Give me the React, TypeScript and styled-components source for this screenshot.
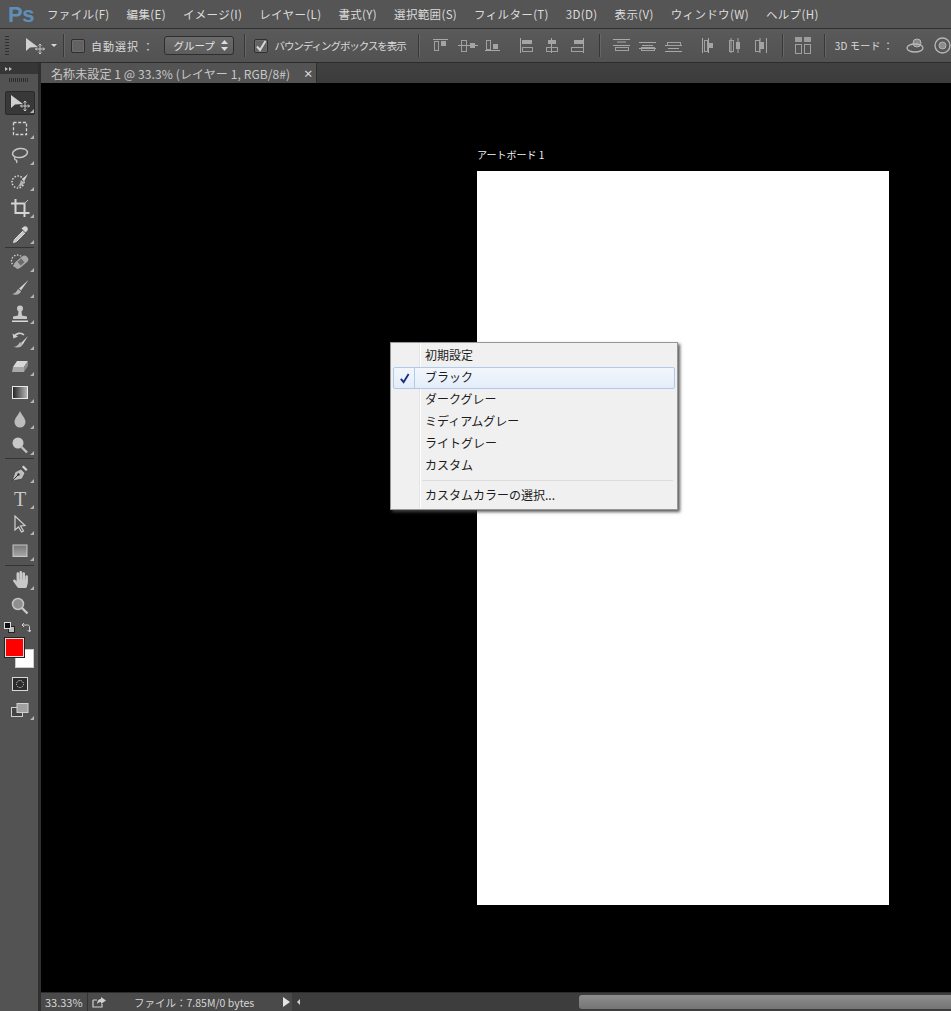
import React from "react";
import styled, { createGlobalStyle } from "styled-components";
import { FaHandPaper } from "react-icons/fa";

const menus = [
  "ファイル(F)",
  "編集(E)",
  "イメージ(I)",
  "レイヤー(L)",
  "書式(Y)",
  "選択範囲(S)",
  "フィルター(T)",
  "3D(D)",
  "表示(V)",
  "ウィンドウ(W)",
  "ヘルプ(H)",
];

const bgItems = ["初期設定", "ブラック", "ダークグレー", "ミディアムグレー", "ライトグレー", "カスタム"];

const Global = createGlobalStyle`
  html, body {
    margin: 0;
    height: 1011px;
    overflow: hidden;
    background: #000;
  }
  * { box-sizing: border-box; }
`;

const Shell = styled.div`
  width: 951px;
  height: 1011px;
  display: flex;
  flex-direction: column;
  overflow: hidden;
  background: #535353;
  color: #d4d4d4;
  font-family: "Noto Sans CJK JP", "Noto Sans", sans-serif;
  font-size: 11px;
`;

const MenuBar = styled.div`
  height: 29px;
  flex: none;
  display: flex;
  align-items: center;
  padding-left: 8px;
  background: #555;
  border-bottom: 1px solid #303030;
`;
const Logo = styled.span`
  width: 39px;
  font-family: "Liberation Sans", sans-serif;
  font-size: 22px;
  font-weight: 700;
  color: #5f8fb8;
  letter-spacing: -0.5px;
  line-height: 29px;
`;
const MenuItem = styled.span`
  margin-right: 17px;
  font-size: 11.5px;
  letter-spacing: 0.35px;
  color: #dcdcdc;
  white-space: nowrap;
`;

const OptionsBar = styled.div`
  height: 34px;
  flex: none;
  display: flex;
  align-items: center;
  background: linear-gradient(#5a5a5a, #525252);
  border-bottom: 1px solid #2c2c2c;
  overflow: hidden;
  svg {
    flex: none;
  }
`;
const Grip = styled.div`
  flex: none;
  width: 4px;
  height: 20px;
  margin: 0 15px 0 5px;
  background: repeating-linear-gradient(#2f2f2f 0 1px, transparent 1px 3px);
`;
const Divider = styled.div<{ $left: number; $right: number }>`
  flex: none;
  width: 1px;
  height: 23px;
  margin: 0 ${(p) => p.$right}px 0 ${(p) => p.$left}px;
  background: #383838;
  box-shadow: 1px 0 0 #666;
`;
const CheckBox = styled.div`
  flex: none;
  width: 14px;
  height: 14px;
  display: flex;
  align-items: center;
  justify-content: center;
  border: 1px solid #2f2f2f;
  border-radius: 2px;
  background: #626262;
  box-shadow: inset 0 0 0 1px #6d6d6d;
`;
const OptionLabel = styled.span<{ $left: number; $gap?: string; $size?: number }>`
  flex: none;
  margin-left: ${(p) => p.$left}px;
  font-size: ${(p) => p.$size || 11}px;
  letter-spacing: ${(p) => p.$gap || "0"};
  color: #dadada;
  white-space: nowrap;
`;
const SelectBox = styled.div`
  flex: none;
  width: 70px;
  height: 19px;
  margin-left: 10px;
  padding: 0 5px 0 8px;
  display: flex;
  align-items: center;
  justify-content: space-between;
  border: 1px solid #2e2e2e;
  border-radius: 3px;
  background: linear-gradient(#6b6b6b, #5c5c5c);
  color: #e2e2e2;
  font-size: 10.5px;
`;
const SelectArrows = styled.svg`
  width: 7px;
  height: 11px;
`;
const Spaced = styled.div<{ $left: number }>`
  flex: none;
  display: flex;
  margin-left: ${(p) => p.$left}px;
`;
const ArrowDown = styled.div`
  flex: none;
  width: 0;
  height: 0;
  margin: 0 0 0 5px;
  border: 3px solid transparent;
  border-top: 3px solid #d8d8d8;
  border-bottom: 0;
`;

const Workspace = styled.div`
  flex: 1;
  min-height: 0;
  display: flex;
`;

const Toolbox = styled.div`
  flex: none;
  width: 41px;
  display: flex;
  flex-direction: column;
  background: #535353;
  border-right: 3px solid #2f2f2f;
`;
const ToolboxHead = styled.div`
  height: 11px;
  padding-left: 5px;
  display: flex;
  gap: 1px;
  align-items: center;
  background: #363636;
`;
const HeadArrow = styled.span`
  width: 0;
  height: 0;
  border-left: 3px solid #c0c0c0;
  border-top: 2.5px solid transparent;
  border-bottom: 2.5px solid transparent;
`;
const ToolGrip = styled.div`
  width: 20px;
  height: 4px;
  margin: 4px auto 8px 9px;
  background: repeating-linear-gradient(90deg, #2d2d2d 0 1px, transparent 1px 2px);
`;
const ToolButton = styled.div<{ $active?: boolean; $more?: boolean }>`
  position: relative;
  flex: none;
  width: 30px;
  height: 24px;
  margin: 1px 0 1.15px 5px;
  display: flex;
  align-items: center;
  justify-content: center;
  border-radius: 2px;
  background: ${(p) => (p.$active ? "#383838" : "transparent")};
  border: 1px solid ${(p) => (p.$active ? "#2a2a2a" : "transparent")};
  color: #c4c4c4;
  &::after {
    content: "";
    display: ${(p) => (p.$more ? "block" : "none")};
    position: absolute;
    right: 0;
    bottom: 1px;
    width: 0;
    height: 0;
    border-left: 4px solid transparent;
    border-bottom: 4px solid #b4b4b4;
  }
`;
const ToolRule = styled.div`
  flex: none;
  width: 29px;
  height: 1px;
  margin: 0.5px 0 0.5px 5px;
  background: #333;
`;
const TypeGlyph = styled.span`
  font-family: "Liberation Serif", serif;
  font-size: 20px;
  line-height: 20px;
  color: #c8c8c8;
`;
const SwapRow = styled.div`
  height: 13px;
  margin-top: 2px;
  padding: 0 7px 0 4px;
  display: flex;
  align-items: center;
  justify-content: space-between;
`;
const MiniSwatches = styled.div`
  position: relative;
  width: 11px;
  height: 11px;
`;
const MiniBack = styled.span`
  position: absolute;
  right: 0;
  bottom: 0;
  width: 7px;
  height: 7px;
  background: #bbb;
  border: 1px solid #222;
`;
const MiniFront = styled.span`
  position: absolute;
  left: 0;
  top: 0;
  width: 7px;
  height: 7px;
  background: #111;
  border: 1px solid #ddd;
`;
const ColorStack = styled.div`
  position: relative;
  width: 29px;
  height: 30px;
  margin: 4px 0 3px 5px;
`;
const BackColor = styled.div`
  position: absolute;
  right: 0;
  bottom: 0;
  width: 19px;
  height: 19px;
  background: #fff;
  border: 1px solid #ccc;
`;
const FrontColor = styled.div`
  position: absolute;
  left: 0;
  top: 0;
  width: 19px;
  height: 19px;
  background: #f00;
  border: 1px solid #ddd;
  box-shadow: 0 0 0 1px #222;
`;

const Main = styled.div`
  flex: 1;
  min-width: 0;
  display: flex;
  flex-direction: column;
`;
const TabStrip = styled.div`
  height: 20px;
  flex: none;
  display: flex;
  background: linear-gradient(#414141, #3b3b3b);
`;
const DocTab = styled.div`
  width: 276px;
  padding-left: 10px;
  display: flex;
  align-items: center;
  background: #535353;
  border-right: 1px solid #2e2e2e;
  color: #c8c8c8;
  font-size: 12px;
  letter-spacing: 0.1px;
  white-space: nowrap;
`;
const TabClose = styled.span`
  margin-left: 13px;
  font-size: 10px;
  font-weight: 700;
  color: #ddd;
`;

const Canvas = styled.div`
  position: relative;
  flex: 1;
  min-height: 0;
  padding: 65px 0 0 436px;
  background: #000;
`;
const ArtboardLabel = styled.div`
  height: 23px;
  color: #f2f2f2;
  font-size: 10px;
  line-height: 14px;
`;
const Artboard = styled.div`
  width: 412px;
  height: 734px;
  background: #fff;
`;

const ContextMenu = styled.div`
  position: absolute;
  left: 349px;
  top: 259px;
  width: 288px;
  height: 168px;
  padding: 2px;
  background: linear-gradient(90deg, #f0f0f0 0 28px, #e3e3e3 28px 29px, #fff 29px 30px, #f0f0f0 30px);
  border: 1px solid #979797;
  box-shadow: 2px 2px 3px rgba(70, 70, 70, 0.9);
  color: #1c1c1c;
  font-size: 12px;
`;
const ContextRow = styled.div<{ $checked?: boolean }>`
  position: relative;
  height: 22px;
  padding: 0 0 4px 31px;
  display: flex;
  align-items: center;
  border: 1px solid ${(p) => (p.$checked ? "#aecbeb" : "transparent")};
  border-radius: 2px;
  background: ${(p) => (p.$checked ? "linear-gradient(#f3f7fc, #e3edf9)" : "transparent")};
  white-space: nowrap;
`;
const CheckCell = styled.div`
  position: absolute;
  left: 0;
  top: 0;
  bottom: 0;
  width: 21px;
  display: flex;
  align-items: center;
  justify-content: center;
  border-right: 1px solid #aecbeb;
`;
const ContextRule = styled.div`
  height: 1px;
  margin: 3px 2px 4px 29px;
  background: #dcdcdc;
`;

const StatusBar = styled.div`
  height: 19px;
  flex: none;
  display: flex;
  align-items: center;
  background: #4a4a4a;
  border-top: 1px solid #2b2b2b;
  color: #d6d6d6;
  font-size: 10.5px;
`;
const Zoom = styled.div`
  width: 47px;
  height: 100%;
  padding-left: 4px;
  display: flex;
  align-items: center;
  border-right: 1px solid #333;
  font-size: 11px;
`;
const ShareBox = styled.div`
  width: 30px;
  padding-left: 4px;
  display: flex;
  align-items: center;
`;
const DocInfo = styled.div`
  width: 165px;
  padding-left: 16px;
  white-space: nowrap;
`;
const PlayArrow = styled.span`
  width: 0;
  height: 0;
  margin-right: 2px;
  border-left: 7px solid #e4e4e4;
  border-top: 5px solid transparent;
  border-bottom: 5px solid transparent;
`;
const ScrollTrack = styled.div`
  flex: 1;
  height: 100%;
  padding-left: 5px;
  display: flex;
  align-items: center;
  background: #3d3d3d;
`;
const ScrollLeft = styled.span`
  width: 0;
  height: 0;
  margin-right: 279px;
  border-right: 3px solid #d0d0d0;
  border-top: 3px solid transparent;
  border-bottom: 3px solid transparent;
`;
const ScrollThumb = styled.div`
  flex: 1;
  height: 14px;
  border-radius: 3px 0 0 3px;
  background: linear-gradient(#8e8e8e, #747474);
`;

const Svg = ({ w = 20, h = 20, children }: { w?: number; h?: number; children: React.ReactNode }) => (
  <svg width={w} height={h} viewBox={`0 0 ${w} ${h}`}>
    {children}
  </svg>
);

const MoveIcon = () => (
  <Svg w={22} h={18}>
    <path d="M2 1v13l4-3.5 8-.5z" fill="#d0d0d0" />
    <path
      d="M16 7v10M11.5 12h9M14.5 8.5L16 7l1.5 1.5M14.5 15.500L16 17l1.500-1.500M13 10.500L11.500 12l1.500 1.500M19 10.500l1.500 1.500-1.500 1.500"
      stroke="#c8c8c8"
      fill="none"
    />
  </Svg>
);

const tools: Record<string, React.ReactNode> = {
  marquee: (
    <Svg>
      <rect x="3.500" y="3.500" width="13" height="12" fill="none" stroke="#d4d4d4" strokeWidth="1.300" strokeDasharray="3 1.700" />
    </Svg>
  ),
  lasso: (
    <Svg>
      <ellipse cx="10" cy="8" rx="7.500" ry="4.500" fill="none" stroke="#c8c8c8" strokeWidth="1.500" transform="rotate(-8 10 8)" />
      <path d="M5 12c-1 2 0 3 1 3s1 2 .5 3" fill="none" stroke="#c8c8c8" strokeWidth="1.300" />
    </Svg>
  ),
  quick: (
    <Svg>
      <circle cx="8" cy="11" r="6" fill="none" stroke="#d8d8d8" strokeWidth="1.500" strokeDasharray="1.500 1.500" />
      <path d="M18 3l-6 5 2 2.500z" fill="#d4d4d4" />
      <path d="M11 9l3 2.500c-.5 3-3.500 4.500-6.500 4 2-1 2.500-3.500 3.500-6.500z" fill="#b0b0b0" />
    </Svg>
  ),
  crop: (
    <Svg>
      <path d="M5.500 1v14h14M1 5.500h13.500V19" fill="none" stroke="#d4d4d4" strokeWidth="2" />
      <path d="M14 6l4-4" stroke="#bbb" />
    </Svg>
  ),
  dropper: (
    <Svg>
      <path d="M13 7l-8.500 8.500-1 3 3-1L15 9" fill="#c4c4c4" stroke="#ddd" />
      <path d="M11.500 4.500l4 4 1.500-1.500c2-2 0-6-3-4.500z" fill="#d4d4d4" />
    </Svg>
  ),
  heal: (
    <Svg>
      <circle cx="7.500" cy="9" r="6" fill="none" stroke="#d4d4d4" strokeWidth="1.300" strokeDasharray="1.500 1.500" />
      <rect x="3" y="6.500" width="16" height="7.500" rx="3.700" fill="#a8a8a8" transform="rotate(-40 11 10)" />
      <rect x="8.500" y="7.500" width="5" height="5" fill="#6c6c6c" transform="rotate(-40 11 10)" />
    </Svg>
  ),
  brush: (
    <Svg>
      <path d="M18.500 2L9 10.500l2 2z" fill="#d0d0d0" />
      <path d="M8 11l3 2.500c-1 3-5 4-9 2.500 3-.5 4.500-2 6-5z" fill="#b4b4b4" />
    </Svg>
  ),
  stamp: (
    <Svg>
      <circle cx="10" cy="4.500" r="3" fill="#c8c8c8" />
      <path d="M8.500 7h3l.5 4.500 5 1V15H3v-2.500l5-1z" fill="#c8c8c8" />
      <rect x="2" y="16.500" width="16" height="1.500" fill="#d8d8d8" />
    </Svg>
  ),
  history: (
    <Svg>
      <path d="M4 7c2-4 7-5 10-2" fill="none" stroke="#d0d0d0" strokeWidth="1.600" />
      <path d="M2.500 3.500l1 5 4.500-2z" fill="#d0d0d0" />
      <path d="M18 6l-7 7 1.500 2z" fill="#d4d4d4" />
      <path d="M10 12l2.500 3c-1.500 2.500-5 3-9 2 3-.5 5-2 6.500-5z" fill="#b8b8b8" />
    </Svg>
  ),
  eraser: (
    <Svg>
      <path d="M7 5h11l-4 6H3z" fill="#d8d8d8" />
      <path d="M3 11h11v5H2z" fill="#a8a8a8" />
      <path d="M14 11l4-6v5l-4 6z" fill="#8c8c8c" />
    </Svg>
  ),
  gradient: (
    <Svg>
      <defs>
        <linearGradient id="toolGrad" x1="0" x2="1" y1="0" y2="0">
          <stop offset="0" stopColor="#222" />
          <stop offset="1" stopColor="#bbb" />
        </linearGradient>
      </defs>
      <rect x="2.500" y="3.500" width="15" height="12" fill="url(#toolGrad)" stroke="#e8e8e8" />
    </Svg>
  ),
  blur: (
    <Svg>
      <path d="M10 2c1.500 4 5.500 7 5.500 11a5.500 5.500 0 0 1-11 0C4.500 9 8.500 6 10 2z" fill="#bcbcbc" />
    </Svg>
  ),
  dodge: (
    <Svg>
      <circle cx="8" cy="8" r="5.500" fill="#c8c8c8" />
      <path d="M11.500 12l5.500 5.500" stroke="#c0c0c0" strokeWidth="2.400" />
    </Svg>
  ),
  pen: (
    <Svg>
      <path d="M2 18l3-9 6-3 4 4-3 6z" fill="#bdbdbd" stroke="#333" strokeWidth=".6" />
      <path d="M2.500 17.500L8 12" stroke="#333" />
      <circle cx="8.500" cy="11.500" r="1.200" fill="#333" />
      <path d="M12 4l1.500-1.500 4 4L16 8z" fill="#d8d8d8" />
    </Svg>
  ),
  path: (
    <Svg>
      <path d="M5 1v14l3.500-3 3 5 2-1-3-5 4.500-.5z" fill="#535353" stroke="#d0d0d0" strokeWidth="1.200" />
    </Svg>
  ),
  shape: (
    <Svg>
      <defs>
        <linearGradient id="toolShape" x1="0" x2="0" y1="0" y2="1">
          <stop offset="0" stopColor="#777" />
          <stop offset="1" stopColor="#a8a8a8" />
        </linearGradient>
      </defs>
      <rect x="3" y="4" width="14" height="11.500" fill="url(#toolShape)" stroke="#c8c8c8" />
    </Svg>
  ),
  zoom: (
    <Svg>
      <circle cx="8" cy="8" r="5.500" fill="#8f8f8f" stroke="#c4c4c4" strokeWidth="1.500" />
      <path d="M12 12l5.500 5.500" stroke="#c8c8c8" strokeWidth="2.400" />
    </Svg>
  ),
  quickMask: (
    <Svg w={16} h={14}>
      <rect x=".5" y=".5" width="15" height="13" fill="#2b2b2b" stroke="#d8d8d8" />
      <circle cx="8" cy="7" r="3.500" fill="none" stroke="#e4e4e4" strokeDasharray="1.200 1.200" />
    </Svg>
  ),
  screen: (
    <Svg w={18} h={14}>
      <rect x=".5" y="4.500" width="11" height="9" fill="#444" stroke="#d0d0d0" />
      <rect x="6" y=".5" width="11" height="9" fill="#a0a0a0" stroke="#d0d0d0" />
    </Svg>
  ),
};

// r = rects drawn for each align icon, l = guide lines
const alignIcons: { w: number; r: number[][]; l: number[][] }[] = [
  { w: 15, r: [[1, 3, 4, 9, 0], [8, 3, 5, 5, 1]], l: [[0, 1.500, 15, 1.500]] },
  { w: 20, r: [[3, 2, 5, 11, 0], [12, 5, 5, 5, 1]], l: [[0, 7.500, 20, 7.500]] },
  { w: 15, r: [[1, 2, 4, 9, 0], [8, 6, 5, 5, 1]], l: [[0, 12.500, 15, 12.500]] },
  { w: 14, r: [[3, 2, 10, 4, 1], [3, 9, 10, 4, 0]], l: [[1.500, 0, 1.500, 15]] },
  { w: 12, r: [[2, 2, 8, 4, 1], [0, 9, 11, 4, 0]], l: [[5.500, 0, 5.500, 15]] },
  { w: 14, r: [[3, 2, 9, 4, 1], [0, 9, 12, 4, 0]], l: [[12.500, 0, 12.500, 15]] },
  { w: 17, r: [[2, 9, 13, 3, 0]], l: [[0, 1.500, 17, 1.500], [0, 7.500, 17, 7.500], [4, 4, 13, 4]] },
  { w: 17, r: [[2, 9, 13, 3, 0]], l: [[0, 4.500, 17, 4.500], [0, 10.500, 17, 10.500], [3, 7.500, 14, 7.500]] },
  { w: 17, r: [[2, 4, 13, 3, 0]], l: [[0, 7.500, 17, 7.500], [0, 13.500, 17, 13.500], [3, 10.500, 14, 10.500]] },
  { w: 13, r: [[2, 2, 3, 11, 0], [7, 5, 4, 5, 1]], l: [[.5, 0, .5, 15], [6.500, 0, 6.500, 15]] },
  { w: 13, r: [[1, 2, 4, 11, 0], [8, 4, 4, 7, 1]], l: [[3, 0, 3, 15], [10, 0, 10, 15]] },
  { w: 13, r: [[1, 2, 4, 11, 0], [6, 4, 4, 7, 1]], l: [[6, 0, 6, 15], [12.500, 0, 12.500, 15]] },
];

const AlignIcon = ({ index }: { index: number }) => {
  const icon = alignIcons[index];
  return (
    <Svg w={icon.w} h={15}>
      {icon.l.map((l, i) => (
        <line key={i} x1={l[0]} y1={l[1]} x2={l[2]} y2={l[3]} stroke="#a8a8a8" />
      ))}
      {icon.r.map((r, i) =>
        r[4] ? (
          <rect key={i} x={r[0]} y={r[1]} width={r[2]} height={r[3]} fill="#a4a4a4" />
        ) : (
          <rect key={i} x={r[0] + 0.5} y={r[1] + 0.5} width={r[2]} height={r[3]} fill="none" stroke="#a0a0a0" />
        )
      )}
    </Svg>
  );
};

const Check = ({ color, size }: { color: string; size: number }) => (
  <svg width={size} height={size} viewBox="0 0 12 12">
    <path d="M2 6.500l3 3.500 5.500-9" fill="none" stroke={color} strokeWidth="2" />
  </svg>
);

const Tool = ({ name, more = true, active }: { name: string; more?: boolean; active?: boolean }) => (
  <ToolButton $more={more} $active={active}>
    {tools[name]}
  </ToolButton>
);

export default function App() {
  return (
    <Shell>
      <Global />
      <MenuBar>
        <Logo>Ps</Logo>
        {menus.map((m) => (
          <MenuItem key={m}>{m}</MenuItem>
        ))}
      </MenuBar>

      <OptionsBar>
        <Grip />
        <MoveIcon />
        <ArrowDown />
        <Divider $left={6} $right={7} />
        <CheckBox />
        <OptionLabel $left={6} $gap="1px">自動選択 ：</OptionLabel>
        <SelectBox>
          グループ
          <SelectArrows viewBox="0 0 7 11">
            <path d="M3.500 0L7 4H0zM3.500 11L0 7h7z" fill="#ddd" />
          </SelectArrows>
        </SelectBox>
        <Divider $left={10} $right={9} />
        <CheckBox>
          <Check color="#d8d8d8" size={12} />
        </CheckBox>
        <OptionLabel $left={6} $size={10.5} $gap="-1.05px">バウンディングボックスを表示</OptionLabel>
        <Divider $left={12} $right={14} />
        <AlignIcon index={0} />
        <Spaced $left={10}><AlignIcon index={1} /></Spaced>
        <Spaced $left={7}><AlignIcon index={2} /></Spaced>
        <Spaced $left={19}><AlignIcon index={3} /></Spaced>
        <Spaced $left={13}><AlignIcon index={4} /></Spaced>
        <Spaced $left={13}><AlignIcon index={5} /></Spaced>
        <Divider $left={14} $right={13} />
        <AlignIcon index={6} />
        <Spaced $left={9}><AlignIcon index={7} /></Spaced>
        <Spaced $left={9}><AlignIcon index={8} /></Spaced>
        <Spaced $left={20}><AlignIcon index={9} /></Spaced>
        <Spaced $left={13}><AlignIcon index={10} /></Spaced>
        <Spaced $left={13}><AlignIcon index={11} /></Spaced>
        <Divider $left={15} $right={12} />
        <Svg w={16} h={17}>
          <rect x="0" y="0" width="7" height="5" fill="#9c9c9c" />
          <rect x="9" y="0" width="7" height="5" fill="#9c9c9c" />
          <rect x=".5" y="7.500" width="6" height="9" fill="none" stroke="#a0a0a0" />
          <rect x="9.500" y="7.500" width="6" height="9" fill="none" stroke="#a0a0a0" />
        </Svg>
        <Divider $left={13} $right={10} />
        <OptionLabel $left={0} $size={10} $gap=".2px">3D モード ：</OptionLabel>
        <Spaced $left={13}>
          <Svg w={19} h={18}>
            <circle cx="11" cy="6" r="4" fill="#888" stroke="#b8b8b8" />
            <ellipse cx="9" cy="11" rx="8" ry="4" fill="none" stroke="#b8b8b8" strokeWidth="1.300" />
          </Svg>
        </Spaced>
        <Spaced $left={9}>
          <Svg w={17} h={17}>
            <circle cx="8.500" cy="8.500" r="7.500" fill="none" stroke="#b4b4b4" strokeWidth="1.400" />
            <circle cx="8.500" cy="8.500" r="3.500" fill="#8c8c8c" stroke="#b4b4b4" />
          </Svg>
        </Spaced>
        <Spaced $left={5}>
          <Svg w={10} h={17}>
            <path d="M1 8.500h9" stroke="#b4b4b4" strokeWidth="1.500" />
          </Svg>
        </Spaced>
      </OptionsBar>

      <Workspace>
        <Toolbox>
          <ToolboxHead>
            <HeadArrow />
            <HeadArrow />
          </ToolboxHead>
          <ToolGrip />
          <ToolButton $active $more>
            <MoveIcon />
          </ToolButton>
          <Tool name="marquee" />
          <Tool name="lasso" />
          <Tool name="quick" />
          <Tool name="crop" />
          <Tool name="dropper" />
          <ToolRule />
          <Tool name="heal" />
          <Tool name="brush" />
          <Tool name="stamp" />
          <Tool name="history" />
          <Tool name="eraser" />
          <Tool name="gradient" />
          <Tool name="blur" />
          <Tool name="dodge" />
          <ToolRule />
          <Tool name="pen" />
          <ToolButton $more>
            <TypeGlyph>T</TypeGlyph>
          </ToolButton>
          <Tool name="path" />
          <Tool name="shape" />
          <ToolRule />
          <ToolButton $more>
            <FaHandPaper size={17} color="#c8c8c8" />
          </ToolButton>
          <Tool name="zoom" more={false} />
          <SwapRow>
            <MiniSwatches>
              <MiniBack />
              <MiniFront />
            </MiniSwatches>
            <svg width="10" height="11" viewBox="0 0 10 11">
              <path d="M1 3h5.500c1.500 0 2 1 2 2v5M1 3l2-2M1 3l2 2M8.500 10L6.500 8M8.500 10l1.500-2" fill="none" stroke="#d0d0d0" />
            </svg>
          </SwapRow>
          <ColorStack>
            <BackColor />
            <FrontColor />
          </ColorStack>
          <Tool name="quickMask" more={false} />
          <Tool name="screen" />
        </Toolbox>

        <Main>
          <TabStrip>
            <DocTab>
              名称未設定 1 @ 33.3% (レイヤー 1, RGB/8#)
              <TabClose>×</TabClose>
            </DocTab>
          </TabStrip>
          <Canvas>
            <ArtboardLabel>アートボード 1</ArtboardLabel>
            <Artboard />
            <ContextMenu>
              <ContextRow>{bgItems[0]}</ContextRow>
              <ContextRow $checked>
                <CheckCell>
                  <Check color="#1a2a80" size={11} />
                </CheckCell>
                {bgItems[1]}
              </ContextRow>
              {bgItems.slice(2).map((item) => (
                <ContextRow key={item}>{item}</ContextRow>
              ))}
              <ContextRule />
              <ContextRow>カスタムカラーの選択...</ContextRow>
            </ContextMenu>
          </Canvas>
          <StatusBar>
            <Zoom>33.33%</Zoom>
            <ShareBox>
              <svg width="14" height="11" viewBox="0 0 14 11">
                <path d="M1 3h4M1 3v7h9V7" fill="none" stroke="#cfcfcf" strokeWidth="1.200" />
                <path d="M9 0l5 3.500L9 7V5C7 5 5.500 6 5 7.500 5 4 6.500 2 9 2z" fill="#cfcfcf" />
              </svg>
            </ShareBox>
            <DocInfo>ファイル：7.85M/0 bytes</DocInfo>
            <PlayArrow />
            <ScrollTrack>
              <ScrollLeft />
              <ScrollThumb />
            </ScrollTrack>
          </StatusBar>
        </Main>
      </Workspace>
    </Shell>
  );
}
